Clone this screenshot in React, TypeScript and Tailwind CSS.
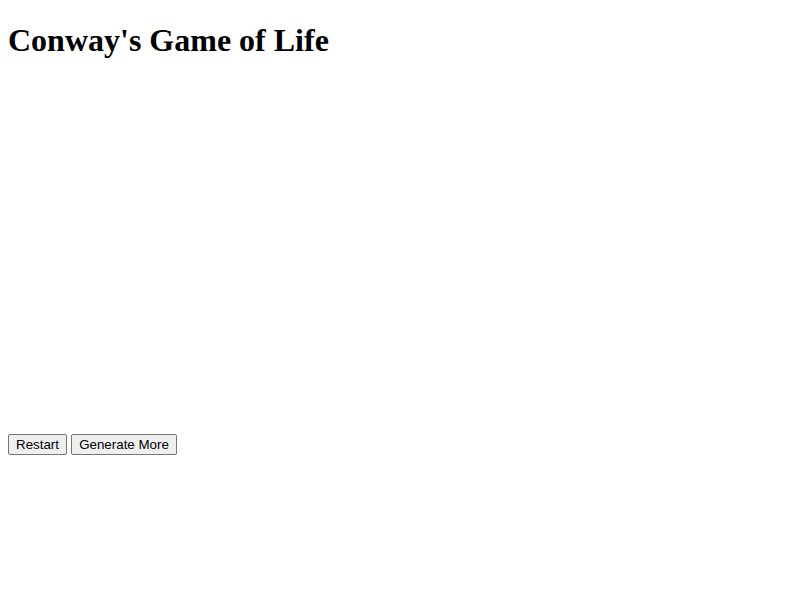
import React from "react";

export default function App() {
  return (
    <div className="bg-white min-h-[600px] px-2 pt-px text-black">
      <h1 className="mt-[21.44px] mb-[20.44px] text-[32px] font-bold leading-[37px] font-['Liberation_Serif',serif]">
        Conway's Game of Life
      </h1>
      <div className="h-[354px]" />
      <div className="flex gap-1 font-['Liberation_Sans',Arial,sans-serif] text-[13.333px]">
        <button className="w-[59px] h-[21px] px-0 py-px border border-[#767676] rounded-[2px] bg-[#efefef] leading-none text-black text-center">
          Restart
        </button>
        <button className="w-[106px] h-[21px] px-0 py-px border border-[#767676] rounded-[2px] bg-[#efefef] leading-none text-black text-center">
          Generate More
        </button>
      </div>
    </div>
  );
}
